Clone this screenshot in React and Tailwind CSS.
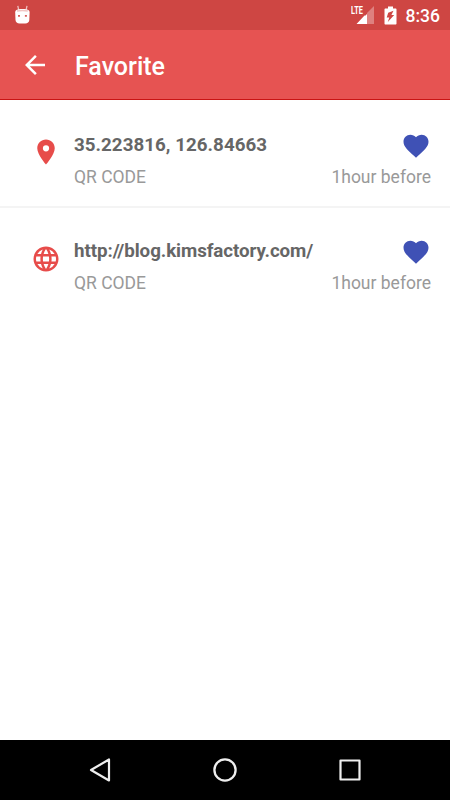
import React from 'react';
import { MdArrowBack, MdFavorite, MdLanguage, MdPlace } from 'react-icons/md';

const items = [
  { id: 1, icon: MdPlace, title: '35.223816, 126.84663', type: 'QR CODE', time: '1hour before', tracking: 'tracking-[0.04px]' },
  { id: 2, icon: MdLanguage, title: 'http://blog.kimsfactory.com/', type: 'QR CODE', time: '1hour before', tracking: 'tracking-[-0.07px]' },
];

const StatusBar = () => (
  <div className="flex h-[30px] items-center bg-[#ce4643] pr-[10px] pl-[14px] text-white">
    <svg className="-mt-px h-[20px] w-[17px]" viewBox="0 0 17 20">
      <path d="M3.800 .8l1 4.500M13 .8l-1 4.500" stroke="#fff" strokeOpacity=".65" strokeWidth="1.300" />
      <path d="M1.200 7.500C1.200 4.900 3.500 4 8.400 4s7.200.9 7.200 3.500l-.3 7.500c-.2 2.300-1.700 3.500-4 3.500H5.500c-2.300 0-3.800-1.200-4-3.500z" fill="#fff" />
      <path d="M3 6Q8.400 4.900 13.800 6" stroke="#f0c5c4" strokeWidth="1.600" fill="none" />
      <path d="M4 10h2v1.800H4zM10.900 10h2v1.800h-2z" fill="#d9605d" />
    </svg>
    <div className="ml-auto flex items-center">
      <div className="flex h-[18px] items-start">
        <span className="w-[10px] origin-top-left scale-x-[0.64] text-[11.5px] leading-[9px] font-bold">LTE</span>
        <svg className="-ml-[5px] h-[18px] w-[18px]" viewBox="0 0 18 18">
          <path d="M18 0v18h-7V7z" fill="#fff" fillOpacity=".32" />
          <path d="M11 8v10H.5L8.500 9.500H9.500z" fill="#fff" />
        </svg>
      </div>
      <svg className="ml-[10px] h-[19px] w-[13px]" viewBox="0 0 13 19">
        <path d="M4 .5h5v2h2.500c.6 0 1 .4 1 1v14c0 .6-.4 1-1 1h-10c-.6 0-1-.4-1-1v-14c0-.6.4-1 1-1H4z" fill="#fff" />
        <path d="M9.500 4.800L4.200 6.800l-1.500 4.600h2.600L3.800 16l6.400-6.900H7.400z" fill="#ce4643" />
      </svg>
      <span className="ml-[9px] pt-px text-[17.5px] leading-[30px] font-medium">8:36</span>
    </div>
  </div>
);

const Toolbar = () => (
  <header className="flex h-[70px] items-center border-b border-[#c91414] bg-[#e65352] pl-5 text-white">
    <MdArrowBack className="size-[30px]" />
    <h1 className="ml-[25px] pt-[5px] text-[25px] leading-[30px] font-medium">Favorite</h1>
  </header>
);

const FavoriteRow = ({ item }) => {
  const Icon = item.icon;

  return (
    <li className="flex h-[106.25px] pt-[29.25px] pr-[19px] pl-[31px]">
      <Icon className="mt-[6.35px] size-[30px] shrink-0 text-[#e74c4a]" />
      <div className="ml-[13px] flex-1">
        <div className="flex h-[30px] items-start justify-between">
          <span className={`mt-[3px] text-[18.75px] leading-[22px] font-bold text-[#666] ${item.tracking}`}>{item.title}</span>
          <MdFavorite className="size-[30px] text-[#3f51b5]" />
        </div>
        <div className="mt-[5px] flex justify-between text-[17.5px] leading-[22px] text-[#999]">
          <span>{item.type}</span>
          <span>{item.time}</span>
        </div>
      </div>
    </li>
  );
};

const NavigationBar = () => (
  <nav className="flex h-[60px] items-center justify-center gap-[95px] bg-black">
    <svg className="size-[30px]" viewBox="0 0 30 30" fill="none" stroke="#eee" strokeWidth="2.200" strokeLinejoin="round">
      <path d="M24 4.500v21L6 15z" />
    </svg>
    <svg className="size-[30px]" viewBox="0 0 30 30" fill="none" stroke="#eee" strokeWidth="2.300">
      <circle cx="15" cy="15" r="10.600" />
    </svg>
    <svg className="size-[30px]" viewBox="0 0 30 30" fill="none" stroke="#eee" strokeWidth="2.200" strokeLinejoin="round">
      <path d="M5.500 5.500h19v19h-19z" />
    </svg>
  </nav>
);

const App = () => {
  return (
    <div className="flex h-[800px] w-[450px] flex-col bg-white font-['Roboto',sans-serif]">
      <StatusBar />
      <Toolbar />
      <ul className="flex-1 pt-[1.75px] [&>li:first-child]:border-b-2 [&>li:first-child]:border-[#f4f4f4]">
        {items.map((item) => (
          <FavoriteRow key={item.id} item={item} />
        ))}
      </ul>
      <NavigationBar />
    </div>
  );
};

export default App;
